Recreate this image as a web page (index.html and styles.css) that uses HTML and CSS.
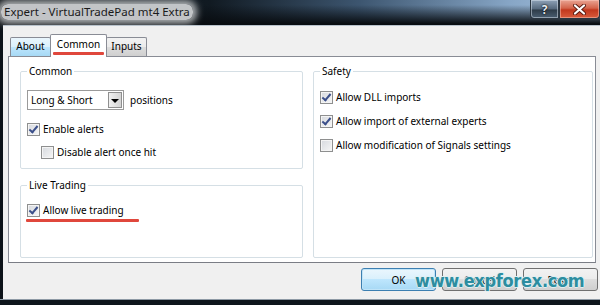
FILE: index.html
```html
<!DOCTYPE html>
<html lang="en">
<head>
    <meta charset="UTF-8">
    <title>Expert - VirtualTradePad mt4 Extra</title>
    <link rel="stylesheet" href="styles.css">
</head>
<body>
    <div class="window">
        <!-- title bar -->
        <div class="titlebar">
            <span class="title">Expert - VirtualTradePad mt4 Extra</span>
            <div class="caption-btns">
                <span class="cap-btn help">?</span>
                <span class="cap-btn close">
                    <svg width="13" height="11" viewBox="0 0 13 11"><path d="M2 1.5 L11 9.5 M11 1.5 L2 9.5" stroke="#5a1a10" stroke-width="4" stroke-linecap="round"/><path d="M2 1.5 L11 9.5 M11 1.5 L2 9.5" stroke="#fff" stroke-width="2.2" stroke-linecap="round"/></svg>
                </span>
            </div>
        </div>

        <div class="client">
            <!-- tabs -->
            <div class="tabs">
                <span class="tab hover">About</span>
                <span class="tab active">Common<i class="red-mark tab-mark"></i></span>
                <span class="tab">Inputs</span>
            </div>

            <div class="panel">
                <div class="col left">
                    <fieldset class="group common">
                        <legend>Common</legend>
                        <div class="select-row">
                            <div class="select">
                                <span class="select-text">Long &amp; Short</span>
                                <span class="select-arrow"></span>
                            </div>
                            <span class="select-label">positions</span>
                        </div>
                        <label class="check gap-row"><span class="box checked"></span>Enable alerts</label>
                        <label class="check indent"><span class="box"></span>Disable alert once hit</label>
                    </fieldset>

                    <fieldset class="group live">
                        <legend>Live Trading</legend>
                        <label class="check"><span class="box checked"></span>Allow live trading</label>
                        <div class="red-mark live-mark"></div>
                    </fieldset>
                </div>

                <div class="col right">
                    <fieldset class="group safety">
                        <legend>Safety</legend>
                        <label class="check"><span class="box checked"></span>Allow DLL imports</label>
                        <label class="check"><span class="box checked"></span>Allow import of external experts</label>
                        <label class="check"><span class="box"></span>Allow modification of Signals settings</label>
                    </fieldset>
                </div>
            </div>

            <!-- dialog buttons -->
            <div class="buttons">
                <button class="btn default">OK</button>
                <button class="btn">Cancel</button>
                <button class="btn">Reset</button>
            </div>
        </div>
        <div class="bottom-frame"></div>

        <span class="watermark">www.expforex.com</span>
    </div>
</body>
</html>
```

FILE: styles.css
```css
* {
    box-sizing: border-box;
}

body {
    margin: 0;
    width: 600px;
    height: 305px;
    overflow: hidden;
    background: #0c1218;
    font-family: "Noto Sans", "Segoe UI", Tahoma, sans-serif;
    font-size: 10px;
    color: #000;
}

.window {
    position: relative;
    width: 600px;
    height: 305px;
    display: flex;
    flex-direction: column;
}

/* title bar */
.titlebar {
    height: 25px;
    display: flex;
    justify-content: space-between;
    align-items: flex-start;
    background:
        linear-gradient(to bottom, rgba(8, 12, 16, 0) 20%, #090d11 95%),
        linear-gradient(to right, #0b1015 0%, #111a22 35%, #3d5670 60%, #87a6c6 85%, #a8c3df 100%);
}

.title {
    margin: 4px 0 0 1px;
    padding: 0 3px;
    font-size: 11.5px;
    line-height: 16px;
    color: #1a1a1a;
    background: rgba(214, 216, 218, 0.9);
    border-radius: 7px;
    box-shadow: 0 0 7px 4px rgba(214, 216, 218, 0.8);
}

.caption-btns {
    display: flex;
}

.cap-btn {
    height: 19px;
    display: flex;
    align-items: center;
    justify-content: center;
    border: 1px solid #2a3540;
    border-top: none;
}

.help {
    width: 29px;
    border-radius: 0 0 0 4px;
    font-weight: bold;
    font-size: 12px;
    color: #e8eef4;
    text-shadow: 0 0 2px #000, 0 0 1px #000;
    background: linear-gradient(to bottom, #8fa3b8, #55687c 50%, #2e3c49 55%, #4a5e71);
    box-shadow: inset 0 0 0 1px rgba(220, 230, 240, 0.5);
}

.close {
    width: 41px;
    border-radius: 0 0 4px 0;
    background: linear-gradient(to bottom, #e9a493, #d3644b 45%, #c2381e 55%, #d85b3c);
    box-shadow: inset 0 0 0 1px rgba(255, 210, 200, 0.45);
}

/* window body */
.client {
    flex: 1;
    display: flex;
    flex-direction: column;
    margin-left: 3px;
    padding-top: 8px;
    background: #f0f0f0;
    border-top: 1px solid #b9c3cc;
}

.bottom-frame {
    height: 6px;
    background: #0e151c;
    border-top: 1px solid #8e9aa5;
}

/* tabs */
.tabs {
    display: flex;
    align-items: flex-end;
    height: 22px;
    padding-left: 7px;
    position: relative;
    z-index: 1;
}

.tab {
    height: 19px;
    width: 41px;
    margin-left: -1px;
    text-align: center;
    line-height: 17px;
    border: 1px solid #898c95;
    border-bottom: none;
    border-radius: 2px 2px 0 0;
    background: linear-gradient(to bottom, #f2f2f2, #ebebeb 50%, #dddddd 50%, #cfcfcf);
}

.tab:first-child {
    margin-left: 0;
}

.tab.hover {
    background: linear-gradient(to bottom, #eaf6fd, #d9f0fc 50%, #bee6fd 50%, #a7d9f5);
}

.tab.active {
    position: relative;
    width: 57px;
    height: 23px;
    margin-bottom: -1px;
    line-height: 19px;
    background: #fff;
}

.red-mark {
    display: block;
    height: 3px;
    background: #e0473c;
    border-radius: 1px;
}

.tab-mark {
    position: absolute;
    left: 2px;
    bottom: 2px;
    width: 51px;
}

/* tab page */
.panel {
    height: 207px;
    margin: 0 4px 0 5px;
    padding: 7px 2px 4px 11px;
    display: flex;
    gap: 10px;
    background: #fff;
    border: 1px solid #898c95;
    border-bottom-color: #7a7d85;
}

.col {
    display: flex;
    flex-direction: column;
}

.col.left {
    width: 283px;
    gap: 9px;
}

.col.right {
    flex: 1;
}

.group {
    margin: 0;
    padding: 12px 6px 8px 6px;
    border: 1px solid #d5dfe5;
    border-radius: 2px;
}

.group legend {
    padding: 0 2px;
    line-height: 14px;
    height: 14px;
}

.group.live {
    flex: 1;
    padding-top: 10px;
}

.group.safety {
    flex: 1;
    padding-top: 11px;
    display: flex;
    flex-direction: column;
    gap: 8px;
}

/* combo box */
.select-row {
    display: flex;
    align-items: center;
    margin-bottom: 11px;
}

.select {
    width: 97px;
    height: 20px;
    display: flex;
    border: 1px solid #9a9a9a;
    background: #fff;
}

.select-text {
    flex: 1;
    padding-left: 3px;
    line-height: 18px;
}

.select-arrow {
    width: 14px;
    margin: 1px;
    border: 1px solid #8f8f8f;
    background: linear-gradient(to right, #f0f0f0, #d4d4d4);
    position: relative;
}

.select-arrow::after {
    content: "";
    position: absolute;
    left: 2px;
    top: 6px;
    border-left: 4px solid transparent;
    border-right: 4px solid transparent;
    border-top: 4px solid #000;
}

.select-label {
    margin-left: 6px;
}

/* check boxes */
.check {
    display: flex;
    align-items: center;
    height: 16px;
}

.check.gap-row {
    margin-bottom: 7px;
}

.check.indent {
    margin-left: 14px;
}

.box {
    width: 13px;
    height: 13px;
    margin-right: 3px;
    border: 1px solid #8e8f8f;
    background: linear-gradient(135deg, #d6d9de, #f6f6f6);
    box-shadow: inset 0 0 0 1px #f4f4f4;
    position: relative;
}

.box.checked::after {
    content: "";
    position: absolute;
    left: 3px;
    top: 0;
    width: 3px;
    height: 7px;
    border-right: 2px solid #3b4f8a;
    border-bottom: 2px solid #3b4f8a;
    transform: rotate(40deg);
}

.live-mark {
    width: 113px;
    margin: 1px 0 0 -1px;
}

/* dialog buttons */
.buttons {
    display: flex;
    justify-content: flex-end;
    gap: 6px;
    margin-top: 5px;
    padding-right: 2px;
}

.btn {
    width: 75px;
    height: 23px;
    padding: 0;
    font-family: inherit;
    font-size: 10px;
    color: #000;
    border: 1px solid #707070;
    border-radius: 3px;
    background: linear-gradient(to bottom, #f2f2f2, #ebebeb 50%, #dddddd 50%, #cfcfcf);
}

.btn.default {
    border-color: #3c7fb1;
    background: linear-gradient(to bottom, #eaf6fd, #d9f0fc 50%, #bee6fd 50%, #a7d9f5);
    box-shadow: inset 0 0 0 1px #c0e4f8;
}

/* watermark over the buttons */
.watermark {
    position: absolute;
    left: 415px;
    top: 270px;
    font-family: "DejaVu Sans Condensed", "DejaVu Sans", sans-serif;
    font-weight: bold;
    font-size: 18px;
    letter-spacing: -0.3px;
    color: #2c8da0;
    text-shadow: 1px 0 0 #dfeef1, -1px 0 0 #dfeef1, 0 1px 0 #dfeef1, 0 -1px 0 #dfeef1;
}
```
